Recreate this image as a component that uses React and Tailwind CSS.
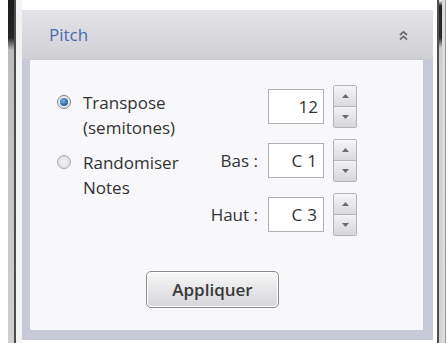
import React from "react";

function Spinner() {
  return (
    <div className="ml-[9px] flex h-[43px] w-[24px] flex-col rounded-[2px] border border-[#b4b4b8] bg-[#e4e4e8]">
      <div className="flex flex-1 items-center justify-center border-b border-[#b8b8bc] bg-[linear-gradient(to_bottom,#f6f6f8,#dadade)]">
        <svg width="7" height="4" viewBox="0 0 7 4"><path d="M0 4 L3.5 0 L7 4 Z" fill="#6a6a70" /></svg>
      </div>
      <div className="flex flex-1 items-center justify-center bg-[linear-gradient(to_bottom,#f2f2f4,#d6d6da)]">
        <svg width="7" height="4" viewBox="0 0 7 4"><path d="M0 0 L3.5 4 L7 0 Z" fill="#6a6a70" /></svg>
      </div>
    </div>
  );
}

function Field({ label, value, pr, tracking }) {
  return (
    <div className="flex h-[43px] items-center justify-end">
      {label && <span className="mr-[10px] text-[17px] font-medium text-[#333]">{label}</span>}
      <div
        className={`flex h-[35px] w-[56px] items-center justify-end border border-[#b0b0b4] bg-white text-[17px] font-medium text-[#333] ${pr} ${tracking}`}
      >
        {value}
      </div>
      <Spinner />
    </div>
  );
}

export default function App() {
  return (
    <div
      className="flex h-[343px] w-[448px] overflow-hidden bg-white"
      style={{ fontFamily: '"Open Sans", "Noto Sans", sans-serif' }}
    >
      {/* left window edge */}
      <div className="flex h-full w-[22px]">
        <div className="w-[8px] bg-white" />
        <div className="w-[6px] bg-[linear-gradient(to_bottom,#1c1c1c_0px,#262626_38px,#bdbdbd_50px,#cfcfcf_100%)]" />
        <div className="w-[2px] bg-[#4c4c4c]" />
        <div className="w-[6px] bg-[#f3f3f3]" />
      </div>

      {/* panel */}
      <div className="mt-[10px] flex h-[330px] w-[411px] flex-col">
        <div className="flex h-[49px] items-center justify-between bg-[linear-gradient(to_bottom,#e4e4e8,#cfcfd4)] pl-[27px] pr-[24px]">
          <span className="text-[17px] font-medium text-[#4b6cae]">Pitch</span>
          <svg width="11" height="11" viewBox="0 0 11 11" className="mt-[2px]">
            <path d="M2 5 L5.5 1.8 L9 5" stroke="#6a6a70" strokeWidth="1.7" fill="none" />
            <path d="M2 9.5 L5.5 6.3 L9 9.5" stroke="#6a6a70" strokeWidth="1.7" fill="none" />
          </svg>
        </div>
        <div className="flex flex-1 bg-[#c8c9d6] pb-[10px] pl-[8px] pr-[10px] pt-[1px]">
          <div className="flex flex-1 flex-col bg-[#f8f8fa] pt-[25px]">
            <div className="flex">
              <div className="ml-[27px] mt-[5px] flex flex-col gap-[10px] text-[17px] font-medium leading-[25px] text-[#333]">
                <div className="flex">
                  <div className="mr-[12px] mt-[5px] flex h-[14px] w-[14px] items-center justify-center rounded-full border border-[#7d8590] bg-[radial-gradient(circle,#ffffff,#d8dbe0)]">
                    <div className="h-[8px] w-[8px] rounded-full bg-[radial-gradient(circle_at_40%_35%,#7fb0e0,#2d5e9a_70%)]" />
                  </div>
                  <div>
                    <div>Transpose</div>
                    <div>(semitones)</div>
                  </div>
                </div>
                <div className="flex">
                  <div className="mr-[12px] mt-[5px] h-[14px] w-[14px] rounded-full border border-[#a8abb0] bg-[radial-gradient(circle,#f4f4f6,#d4d6da)]" />
                  <div>
                    <div>Randomiser</div>
                    <div>Notes</div>
                  </div>
                </div>
              </div>
              <div className="ml-auto mr-[66px] flex flex-col gap-[11px]">
                <Field value="12" pr="pr-[5px]" tracking="" />
                <Field label="Bas :" value="C1" pr="pr-[1px]" tracking="tracking-[5px]" />
                <Field label="Haut :" value="C3" pr="pr-[1px]" tracking="tracking-[5px]" />
              </div>
            </div>
            <div className="ml-[116px] mt-[35px] flex">
              <div className="flex h-[37px] w-[133px] items-center justify-center rounded-[5px] border border-[#8c8c90] bg-[linear-gradient(to_bottom,#f8f8f8,#e6e6e8_50%,#d8d8dc)] text-[17px] font-semibold text-[#3a3a3a] shadow-[inset_0_0_0_1px_#ffffff]">
                Appliquer
              </div>
            </div>
          </div>
        </div>
      </div>

      {/* right window edge */}
      <div className="flex h-full w-[15px]">
        <div className="w-[4px] bg-white" />
        <div className="w-[2px] bg-[#505050]" />
        <div className="w-[3px] bg-[linear-gradient(to_bottom,#ffffff_0px,#222_6px,#2a2a2a_38px,#cfcfcf_48px,#d4d4d4_100%)]" />
        <div className="w-[3px] bg-[#dcdcdc]" />
        <div className="w-[1px] bg-[#9a9a9a]" />
        <div className="w-[2px] bg-white" />
      </div>
    </div>
  );
}
